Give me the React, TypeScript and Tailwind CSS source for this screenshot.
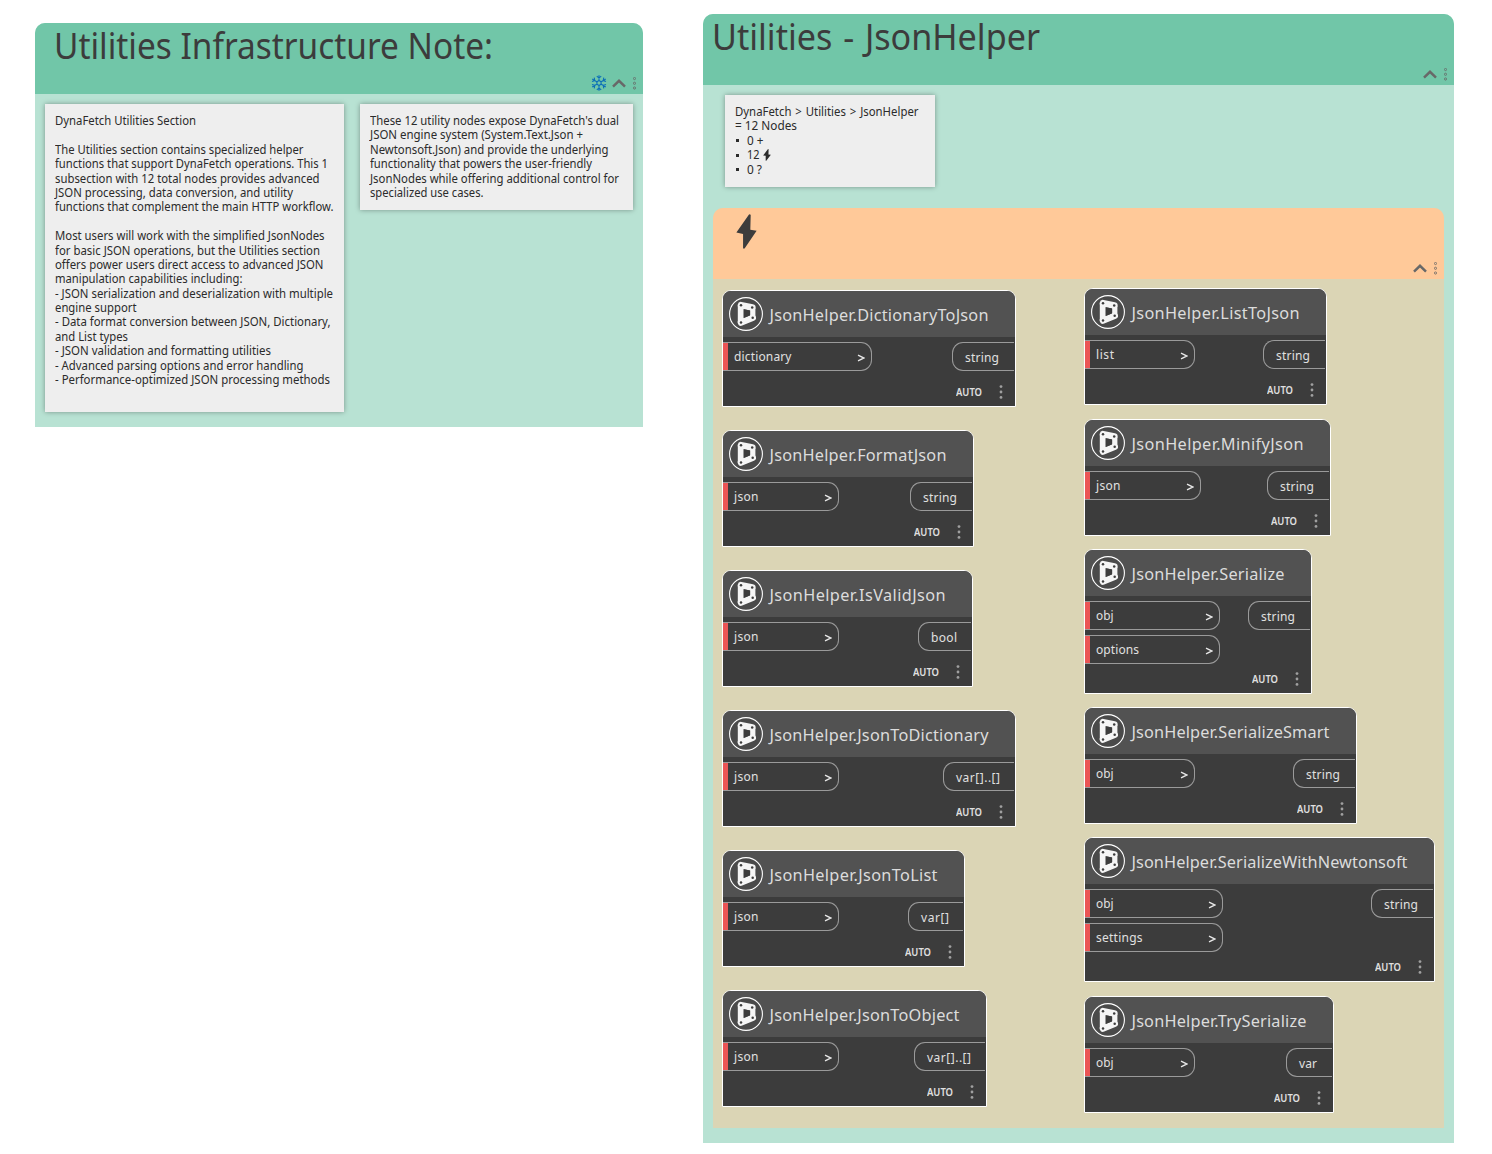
import { useLayoutEffect, useRef } from "react";

type Line = [string, number];
type NodeSpec = {
  title: string;
  w: number;
  inputs: string[];
  inW: number;
  out: string;
  outW: number;
  outTextW: number;
  gap: number;
};

const inputWidths: Record<string, number> = {
  dictionary: 57.5,
  json: 24.5,
  list: 18,
  obj: 17.5,
  options: 43,
  settings: 46.5,
};

/* Text that fills the given width: tracked out when too short, condensed when too long. */
function Fit({ text, w, className = "" }: { text: string; w: number; className?: string }) {
  const ref = useRef<HTMLSpanElement>(null);
  useLayoutEffect(() => {
    const el = ref.current;
    if (!el) return;
    el.style.letterSpacing = "0px";
    el.style.transform = "none";
    const natural = el.getBoundingClientRect().width;
    if (natural > w) el.style.transform = `scaleX(${w / natural})`;
    else el.style.letterSpacing = `${(w - natural) / Math.max(1, text.length - 1)}px`;
  }, [text, w]);
  return (
    <span className={"block shrink-0 whitespace-pre " + className} style={{ width: w }}>
      <span ref={ref} className="inline-block origin-left [font-variant-ligatures:none]">
        {text}
      </span>
    </span>
  );
}

function Note({ lines, className }: { lines: Line[]; className: string }) {
  return (
    <div
      className={
        "shrink-0 bg-[#eeeeee] p-[10px] text-[12px] leading-[14.4px] text-[#2b2b2b] shadow-[0_0_5px_rgba(0,0,0,0.35)] " +
        className
      }
    >
      {lines.map(([t, w], i) => (
        <div key={i} className="flex h-[14.4px]">
          {t && <Fit text={t} w={w} />}
        </div>
      ))}
    </div>
  );
}

function Bolt({ className }: { className: string }) {
  return (
    <svg viewBox="0 0 22 35" preserveAspectRatio="none" className={className} fill="currentColor">
      <path d="M13.8.3 15.4.8 15 15.8 21.6 16.8 9 34.6H7.4V20L.4 18.6Z" />
    </svg>
  );
}

function Snowflake() {
  return (
    <svg viewBox="-8 -8 16 16" className="h-4 w-4" fill="none" stroke="#0b6fb8" strokeWidth="1.1">
      {[0, 60, 120, 180, 240, 300].map((a) => (
        <path key={a} transform={`rotate(${a})`} d="M0-2.2V-7.8M-2.2-6.8 0-4.9 2.2-6.8M0-2.4 2.08-1.2" />
      ))}
    </svg>
  );
}

function GroupTools({ frozen = false }: { frozen?: boolean }) {
  return (
    <div className="flex h-4 items-center justify-end pr-[7px] text-[#686868]">
      {frozen && <Snowflake />}
      <svg viewBox="0 0 14 10" className="ml-[5px] h-[10px] w-[14px]" fill="none" stroke="currentColor" strokeWidth="2.5">
        <path d="M1 8.6 7 2.8 13 8.6" />
      </svg>
      <svg viewBox="0 0 3 13" className="ml-[7px] h-[13px] w-[3px]" fill="none" stroke="currentColor" strokeWidth="0.8">
        <circle cx="1.5" cy="1.5" r="1.1" />
        <circle cx="1.5" cy="6.3" r="1.1" />
        <circle cx="1.5" cy="11" r="1.1" />
      </svg>
    </div>
  );
}

function NodeLogo() {
  return (
    <svg viewBox="-17 -17 34 34" className="h-[34px] w-[34px] shrink-0" fill="none">
      <circle r="16.4" stroke="#fff" strokeWidth="1.1" fill="#4a4a4a" />
      <g fill="#f5f5f5">
        <path d="M-8.2-8.8H-2.4V8.6H-8.2Z" />
        <path d="M4.2-6.6H9.4V3.8H4.2Z" />
      </g>
      <g stroke="#f5f5f5" strokeWidth="6.6" strokeLinecap="round">
        <path d="M-5-8.8 6.3-6.5" />
        <path d="M-5 8.5 6.7 3.8" />
      </g>
      <path d="M-2.2-4.7 3.9-3.6V1.6L-2.2 4Z" fill="#3c3c3c" />
      <g fill="#3c3c3c">
        <circle cx="-5" cy="-8.8" r="1.25" />
        <circle cx="6.2" cy="-6.6" r="1.25" />
        <circle cx="6.7" cy="3.7" r="1.25" />
        <circle cx="-5" cy="8.5" r="1.25" />
      </g>
    </svg>
  );
}

function GraphNode({ n }: { n: NodeSpec }) {
  return (
    <div
      className={
        "flex shrink-0 flex-col overflow-hidden rounded-t-[9px] border border-white bg-[#3c3c3c] text-[#e0e0e0] " +
        (n.inputs.length > 1 ? "h-[145px]" : "h-[117px]")
      }
      style={{ width: n.w, marginBottom: n.gap }}
    >
      <div className="flex h-[46px] shrink-0 items-center bg-[#525252] pl-[6px]">
        <NodeLogo />
        <Fit text={n.title} w={n.w - 75} className="ml-[6.5px] mt-[2px] text-[16.3px] leading-6 text-[#dcdcdc]" />
      </div>
      <div className="flex items-start justify-between pt-[5px]">
        <div className="flex flex-col gap-[5px]">
          {n.inputs.map((p) => (
            <div
              key={p}
              className="flex h-[29px] items-center rounded-r-[11px] border-y border-r border-[#9a9a9a] pr-[6px]"
              style={{ width: n.inW }}
            >
              <span className="h-full w-[5px] bg-[#eb5555]" />
              <Fit text={p} w={inputWidths[p]} className="ml-[6px] text-[12px] leading-4" />
              <svg viewBox="0 0 8 8" className="ml-auto mt-[2px] h-2 w-2" fill="none" stroke="#e6e6e6" strokeWidth="1.4">
                <path d="M1 1.1 7 4 1 6.9" />
              </svg>
            </div>
          ))}
        </div>
        <div
          className="mr-px flex h-[29px] items-center rounded-l-[11px] border-y border-l border-[#9a9a9a] pl-3"
          style={{ width: n.outW }}
        >
          <Fit text={n.out} w={n.outTextW} className="mt-[2px] text-[12px] leading-4" />
        </div>
      </div>
      <div className="mt-auto flex h-7 items-center justify-end pr-[12.5px]">
        <Fit text="AUTO" w={26} className="text-[10px] font-semibold leading-3" />
        <svg viewBox="0 0 4 14" className="ml-[16.5px] h-[14px] w-1" fill="#a0a0a0">
          <circle cx="2" cy="1.6" r="1.4" />
          <circle cx="2" cy="7" r="1.4" />
          <circle cx="2" cy="12.4" r="1.4" />
        </svg>
      </div>
    </div>
  );
}

const mk = (
  title: string,
  w: number,
  inputs: string[],
  inW: number,
  out: string,
  outW: number,
  outTextW: number,
  gap: number
): NodeSpec => ({ title: "JsonHelper." + title, w, inputs, inW, out, outW, outTextW, gap });

const leftNodes = [
  mk("DictionaryToJson", 294, ["dictionary"], 149, "string", 62, 34, 23),
  mk("FormatJson", 252, ["json"], 116, "string", 62, 34, 23),
  mk("IsValidJson", 251, ["json"], 116, "bool", 53, 26, 23),
  mk("JsonToDictionary", 294, ["json"], 116, "var[]..[]", 71, 44, 23),
  mk("JsonToList", 243, ["json"], 116, "var[]", 55, 28, 23),
  mk("JsonToObject", 265, ["json"], 116, "var[]..[]", 71, 44, 0),
];

const rightNodes = [
  mk("ListToJson", 243, ["list"], 110, "string", 62, 34, 14),
  mk("MinifyJson", 247, ["json"], 116, "string", 62, 34, 13),
  mk("Serialize", 228, ["obj", "options"], 135, "string", 62, 34, 13),
  mk("SerializeSmart", 273, ["obj"], 110, "string", 62, 34, 13),
  mk("SerializeWithNewtonsoft", 351, ["obj", "settings"], 138, "string", 62, 34, 14),
  mk("TrySerialize", 250, ["obj"], 110, "var", 46, 18, 0),
];

const overview: Line[] = [
  ["DynaFetch Utilities Section", 141],
  ["", 0],
  ["The Utilities section contains specialized helper", 248.5],
  ["functions that support DynaFetch operations. This 1", 273],
  ["subsection with 12 total nodes provides advanced", 264.5],
  ["JSON processing, data conversion, and utility", 238],
  ["functions that complement the main HTTP workflow.", 278.5],
  ["", 0],
  ["Most users will work with the simplified JsonNodes", 269.5],
  ["for basic JSON operations, but the Utilities section", 265],
  ["offers power users direct access to advanced JSON", 268.5],
  ["manipulation capabilities including:", 187.5],
  ["- JSON serialization and deserialization with multiple", 278],
  ["engine support", 81.5],
  ["- Data format conversion between JSON, Dictionary,", 275.5],
  ["and List types", 73],
  ["- JSON validation and formatting utilities", 216],
  ["- Advanced parsing options and error handling", 248.5],
  ["- Performance-optimized JSON processing methods", 275],
];

const engines: Line[] = [
  ["These 12 utility nodes expose DynaFetch's dual", 249],
  ["JSON engine system (System.Text.Json +", 213],
  ["Newtonsoft.Json) and provide the underlying", 238.5],
  ["functionality that powers the user-friendly", 222],
  ["JsonNodes while offering additional control for", 249],
  ["specialized use cases.", 113.5],
];

const counts: Line[] = [
  ["0 +", 16.5],
  ["12", 12.5],
  ["0 ?", 15],
];

export default function App() {
  return (
    <div className="flex h-[1154px] w-[1492px] items-start bg-white pl-[35px] font-['Noto_Sans','Open_Sans',sans-serif]">
      <section className="mt-[23px] h-[404px] w-[608px] shrink-0 rounded-t-[10px] bg-[#b8e2d3]">
        <header className="flex h-[71px] flex-col justify-between rounded-t-[10px] bg-[#71c6a8] pb-[3px]">
          <h1 className="-mt-[2px] flex pl-[18.5px] text-[36px] leading-[50px] text-[#3c3c3c]">
            <Fit text="Utilities Infrastructure Note:" w={439} />
          </h1>
          <GroupTools frozen />
        </header>
        <div className="flex items-start gap-4 pl-[10px] pt-[10px]">
          <Note lines={overview} className="h-[308px] w-[299px]" />
          <Note lines={engines} className="h-[106px] w-[273px]" />
        </div>
      </section>

      <section className="ml-[60px] mt-[14px] flow-root h-[1129px] w-[751px] shrink-0 rounded-t-[10px] bg-[#b8e2d3]">
        <header className="flex h-[71px] flex-col justify-between rounded-t-[10px] bg-[#71c6a8] pb-[3px]">
          <h1 className="-mt-[2px] flex pl-[8.5px] text-[36px] leading-[50px] text-[#3c3c3c]">
            <Fit text="Utilities - JsonHelper" w={328} className="[word-spacing:2px]" />
          </h1>
          <GroupTools />
        </header>
        <div className="ml-[22px] mt-[10px] h-[92px] w-[210px] bg-[#eeeeee] p-[10px] text-[12px] leading-[14.4px] text-[#2b2b2b] shadow-[0_0_5px_rgba(0,0,0,0.35)]">
          <div className="flex h-[14.4px]">
            <Fit text="DynaFetch > Utilities > JsonHelper" w={183.5} className="[word-spacing:1px]" />
          </div>
          <div className="flex h-[14.4px]">
            <Fit text="= 12 Nodes" w={62} />
          </div>
          {counts.map(([t, w]) => (
            <div key={t} className="flex h-[14.4px] items-center">
              <span className="ml-px mr-[7.5px] h-[3px] w-[3px] bg-[#2b2b2b]" />
              <Fit text={t} w={w} />
              {t === "12" && <Bolt className="ml-1 h-3 w-[8px]" />}
            </div>
          ))}
        </div>
        <div className="ml-[10px] mt-[21px] h-[920px] w-[731px] rounded-t-[10px] bg-[#dbd5b5]">
          <header className="flex h-[71px] flex-col justify-between rounded-t-[10px] bg-[#ffc999] pb-[3px]">
            <Bolt className="ml-[23px] mt-[6px] h-[35px] w-[21px] text-[#3c3c3c]" />
            <GroupTools />
          </header>
          <div className="flex items-start pl-[9px]">
            <div className="mt-[11px] flex w-[362px] shrink-0 flex-col">
              {leftNodes.map((n) => (
                <GraphNode key={n.title} n={n} />
              ))}
            </div>
            <div className="mt-[9px] flex flex-col">
              {rightNodes.map((n) => (
                <GraphNode key={n.title} n={n} />
              ))}
            </div>
          </div>
        </div>
      </section>
    </div>
  );
}
